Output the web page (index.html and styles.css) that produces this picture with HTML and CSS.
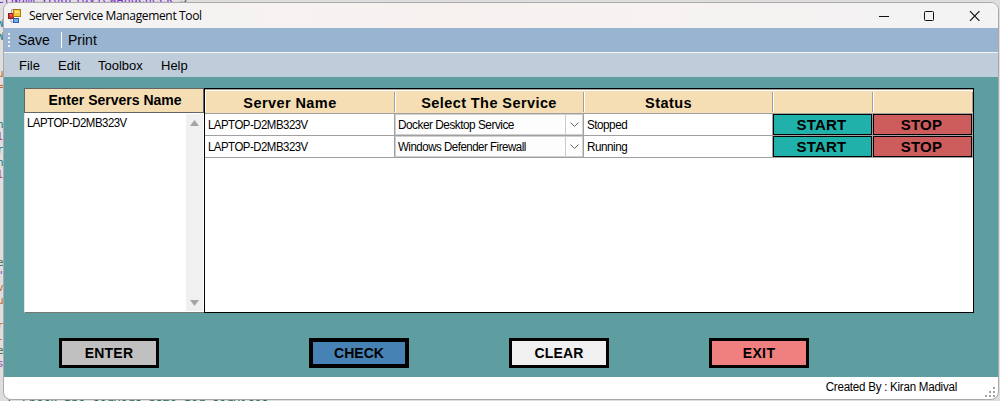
FILE: index.html
```html
<!DOCTYPE html>
<html lang="en">
<head>
<meta charset="utf-8">
<title>Server Service Management Tool</title>
<link rel="stylesheet" href="styles.css">
</head>
<body>
<div class="backdrop" aria-hidden="true">
  <div class="code top"><b>erNamesToGridViewAndCheck</b> <i>S</i></div>
  <div class="code side"><p class="t">W</p><p class="t">W</p><p></p><p></p><p class="o">u</p><p class="o">=</p><p></p><p></p><p class="t">n</p><p class="m">la</p><p class="t">r</p><p class="t">ne</p><p class="m">la</p><p class="g"> s</p><p></p><p></p><p></p><p></p><p></p><p class="g">ec</p><p class="v">"</p><p class="o">v</p><p class="o">ur</p><p></p><p class="o">r</p><p class="o">-(</p><p class="g">e</p><p class="v">s</p></div>
  <div class="code bottom"><span>S Check the servers name for services</span></div>
</div>
<div class="window">
  <header class="titlebar">
    <svg class="appicon" width="14" height="14" viewBox="0 0 14 14">
      <path d="M6 .5H3.5V4M3 10v3h3" fill="none" stroke="#aaa"/>
      <rect x=".5" y="4.5" width="5" height="5" fill="#d93430" stroke="#8f1b1b"/>
      <rect x="5.5" y=".5" width="7" height="7" fill="#f6c638" stroke="#a87814"/>
      <path d="M7 2h4v2H7z" fill="#ffe580"/>
      <rect x="5.5" y="9.5" width="5" height="4" fill="#77a9ed" stroke="#2860b5"/>
      <path d="M2 5.5h2v1H2z" fill="#f08a80"/>
    </svg>
    <span class="caption">Server Service Management Tool</span>
    <svg class="controls" width="102" height="12" viewBox="0 0 102 12" fill="none" stroke="#111">
      <path d="M0 6.5h10"/><rect x="45.5" y="1.5" width="9" height="9" rx="1"/><path d="M91 1.2l9.4 9.6M100.4 1.2L91 10.8" stroke-width="1.2"/>
    </svg>
  </header>
  <nav class="toolbar">
    <span class="grip"></span><span class="save">Save</span><span class="sep"></span><span class="print">Print</span>
  </nav>
  <nav class="menu"><span class="m1">File</span><span class="m2">Edit</span><span class="m3">Toolbox</span><span class="m4">Help</span></nav>
  <main class="content">
    <div class="panels">
      <section class="servers">
        <h2>Enter Servers Name</h2>
        <div class="list">
          <span class="cell">LAPTOP-D2MB323V</span>
          <div class="scroll">
            <svg width="9" height="6"><path d="M4.5 0L9 6H0z" fill="#a5a5a5"/></svg>
            <svg width="9" height="6"><path d="M0 0h9L4.5 6z" fill="#a5a5a5"/></svg>
          </div>
        </div>
      </section>
      <section class="grid">
        <div class="row head"><div>Server Name</div><div>Select The Service</div><div>Status</div><div></div><div></div></div>
        <div class="row">
          <div><span class="cell">LAPTOP-D2MB323V</span></div>
          <div class="combo"><span class="cell docker">Docker Desktop Service</span><i><svg width="9" height="5"><path d="M.5 .5l4 4 4-4" fill="none" stroke="#666"/></svg></i></div>
          <div><span class="cell state">Stopped</span></div>
          <div class="act start"><span>START</span></div><div class="act stop"><span>STOP</span></div>
        </div>
        <div class="row">
          <div><span class="cell">LAPTOP-D2MB323V</span></div>
          <div class="combo"><span class="cell firewall">Windows Defender Firewall</span><i><svg width="9" height="5"><path d="M.5 .5l4 4 4-4" fill="none" stroke="#666"/></svg></i></div>
          <div><span class="cell state">Running</span></div>
          <div class="act start"><span>START</span></div><div class="act stop"><span>STOP</span></div>
        </div>
      </section>
    </div>
    <div class="buttons">
      <button class="enter">ENTER</button><button class="check">CHECK</button><button class="clear">CLEAR</button><button class="exit">EXIT</button>
    </div>
  </main>
  <footer class="status"><span>Created By : Kiran Madival</span>
    <svg width="10" height="10" fill="#a3a3a3"><path d="M8 0h2v2H8zM4 4h2v2H4zM8 4h2v2H8zM0 8h2v2H0zM4 8h2v2H4zM8 8h2v2H8z"/></svg>
  </footer>
</div>
</body>
</html>
```
FILE: styles.css
```css
* { box-sizing: border-box; }
body { margin: 0; width: 1000px; height: 401px; overflow: hidden; position: relative; background: #dedede; font-family: "Liberation Sans", Arial, sans-serif; color: #000; padding: 2px 1px 0 3px; }
.backdrop { position: absolute; inset: 0; overflow: hidden; }
.code { position: absolute; font: 11px/12px "DejaVu Sans Mono", monospace; white-space: pre; }
.top { left: -3px; top: -7px; color: #7a2bd0; font-size: 11.7px; }
.top b { font-weight: 400; }
.top i { color: #555; font-style: normal; }
.side { left: -3px; top: 18px; }
.side p { margin: 0; height: 12.6px; }
.bottom { left: 8px; top: 397px; color: #286c51; font-size: 11.7px; }
.o { color: #c06830; } .g { color: #3c6b55; } .t { color: #087b91; } .m { color: #a13768; } .v { color: #8d4ac0; }
.window { position: relative; width: 996px; height: 398px; border: 1px solid #aaa; border-radius: 8px; overflow: hidden; background: #fff; display: flex; flex-direction: column; }
.titlebar { height: 25px; background: linear-gradient(90deg, #f3f3f3, #f7f2f0 45%, #f3f3f3); display: flex; align-items: center; padding-left: 4px; flex: none; }
.caption { font: 12px/16px "Open Sans", sans-serif; margin-left: 7px; width: 190px; white-space: nowrap; letter-spacing: -.35px; padding-top: 1px; }
.controls { margin-left: auto; margin-right: 17px; }
.toolbar { height: 24px; background: #99b4d1; display: flex; align-items: center; font-size: 14px; padding-left: 4px; flex: none; }
.grip { width: 2px; height: 15px; background: repeating-linear-gradient(#edf1f5 0 2px, transparent 2px 4px); }
.save { margin-left: 8px; width: 43px; }
.sep { width: 1px; height: 16px; background: #fff; }
.print { margin-left: 6px; }
.menu { height: 25px; border-top: 1px solid #f5f5f5; background: #bfcddb; display: flex; align-items: center; font-size: 13px; padding-left: 15px; flex: none; }
.m1 { width: 39px; } .m2 { width: 40px; } .m3 { width: 63px; }
.content { height: 300px; background: #5f9ea0; padding: 11px 24px 0 20px; flex: none; }
.panels { display: flex; height: 225px; }
.servers { width: 180px; }
h2 { margin: 0; height: 25px; border: 1px solid #646464; background: #f5deb3; text-align: center; font-size: 14px; line-height: 23px; padding-left: 2px; }
.list { height: 200px; background: #fff; border-bottom: 1px solid #777; border-left: 1px solid #e3e3e3; display: flex; justify-content: space-between; padding: 3px 1px 1px 2px; }
.cell { font-size: 12px; line-height: 14px; letter-spacing: -.5px; white-space: nowrap; transform: scaleX(.95); transform-origin: 0 0; }
.docker { transform: scaleX(.985); }
.firewall { transform: scaleX(.957); }
.state { transform: scaleX(.975); }
.scroll { width: 17px; margin-top: -2px; background: #f0f0f0; display: flex; flex-direction: column; align-items: center; justify-content: space-between; padding: 6px 0 5px; }
.grid { width: 770px; border: 1px solid #000; background: #fff; }
.row { display: grid; grid-template-columns: 190px 189px 189px 100px 100px; width: 768px; height: 22px; border-bottom: 1px solid #a0a0a0; }
.row > div { border-right: 1px solid #a0a0a0; display: flex; align-items: center; padding-left: 3px; }
.head { height: 25px; border-top: 1px solid #a0a0a0; background: #f5deb3; box-shadow: inset 0 1px #fff; padding: 2px 0 1px; }
.row.head > div { justify-content: center; font-weight: 700; font-size: 14.5px; letter-spacing: .42px; padding: 1px 19px 0 0; box-shadow: inset 1px 0 #fff; white-space: nowrap; }
.row.head > div:nth-child(2) { padding-right: 0; }
.row .combo { box-shadow: inset 0 0 0 1px #d0d0d0; background: #fdfdfd; justify-content: space-between; }
.combo i { width: 18px; height: 19px; border-left: 1px solid #ccc; display: flex; align-items: center; justify-content: center; }
.row .act { border: 1px solid #000; margin-right: 1px; padding: 0 2px 0 0; justify-content: center; font-size: 15px; letter-spacing: .2px; font-weight: 700; background: #20b2aa; box-shadow: 1px 0 #a0a0a0; line-height: 19px; }
.row .stop { background: #cd5c5c; }
.buttons { display: flex; margin: 25px 0 0 35px; }
button { width: 100px; height: 30px; border: 3px solid #000; border-radius: 0; padding: 0 0 1px; font: 700 14px "Liberation Sans", sans-serif; color: #000; }
.enter { background: silver; margin-right: 150px; letter-spacing: .2px; }
.check { border-width: 4px; background: #4682b4; margin-right: 100px; }
.clear { background: #f0f0f0; margin-right: 100px; letter-spacing: .2px; }
.exit { background: #f08080; letter-spacing: .4px; }
.status { height: 22px; display: flex; align-items: center; justify-content: flex-end; padding: 0 3px 2px 0; font-size: 12px; letter-spacing: -.26px; }
.status span { transform: scaleX(.965); transform-origin: 100% 0; }
.status svg { margin: 9px 0 0 28px; }
```
